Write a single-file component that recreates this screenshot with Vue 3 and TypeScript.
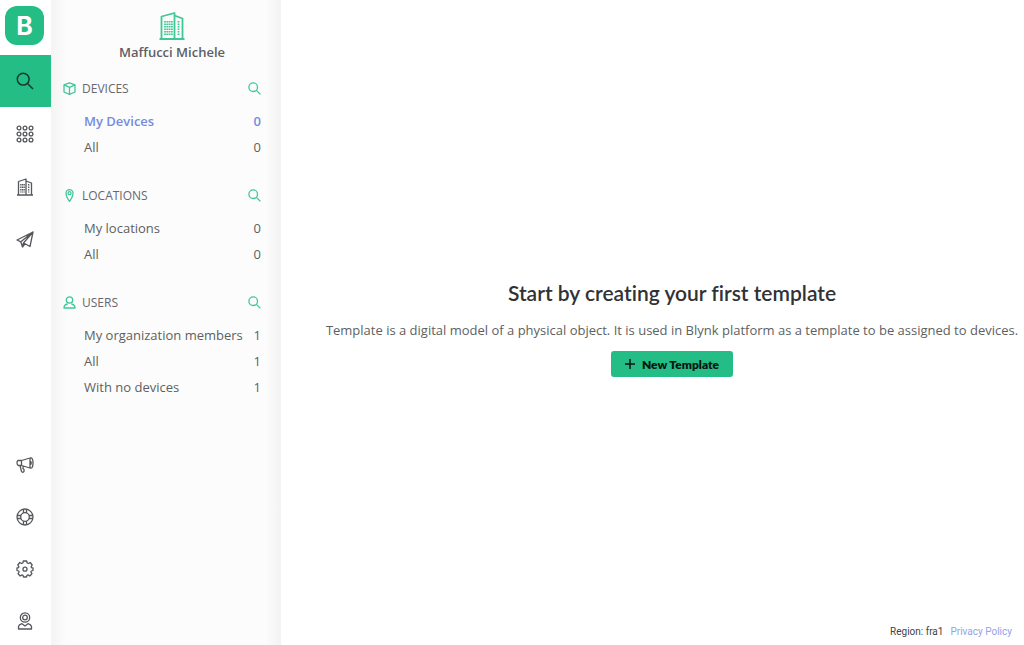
<script setup lang="ts">
interface Row {
  label: string
  count: number
  active?: boolean
}
interface Group {
  title: string
  icon: 'cube' | 'pin' | 'user'
  rows: Row[]
}

const groups: Group[] = [
  {
    title: 'DEVICES',
    icon: 'cube',
    rows: [
      { label: 'My Devices', count: 0, active: true },
      { label: 'All', count: 0 },
    ],
  },
  {
    title: 'LOCATIONS',
    icon: 'pin',
    rows: [
      { label: 'My locations', count: 0 },
      { label: 'All', count: 0 },
    ],
  },
  {
    title: 'USERS',
    icon: 'user',
    rows: [
      { label: 'My organization members', count: 1 },
      { label: 'All', count: 1 },
      { label: 'With no devices', count: 1 },
    ],
  },
]

const dots = [3, 9, 15]
</script>

<template>
  <div class="app">
    <nav class="rail" aria-label="Main">
      <a class="logo" href="#" aria-label="Home">B</a>
      <div class="rail-top">
        <button class="rail-item active" type="button" aria-label="Search">
          <svg width="18" height="18" viewBox="0 0 18 18"><circle cx="7.2" cy="7.2" r="5.9" /><path d="M11.5 11.5L17 17" /></svg>
        </button>
        <button class="rail-item" type="button" aria-label="Templates">
          <svg width="18" height="18" viewBox="0 0 18 18">
            <template v-for="y in dots" :key="y">
              <circle v-for="x in dots" :key="x" :cx="x" :cy="y" r="1.9" />
            </template>
          </svg>
        </button>
        <button class="rail-item" type="button" aria-label="Organizations">
          <svg width="18" height="18" viewBox="0 0 18 18">
            <path d="M1 17H17M2.5 17V3.5L10 1V17M10 3L15.5 5V17" />
            <path class="windows" d="M4.8 6V14.5M6.5 6V14.5M8.2 6V14.5M12.7 6V14.5" />
          </svg>
        </button>
        <button class="rail-item" type="button" aria-label="Messages">
          <svg width="18" height="18" viewBox="0 0 18 18"><path d="M17 1L1 9L4.8 10.8L6.5 16L9 12.8L14 15.5ZM17 1L4.8 10.8M17 1L7.5 12L6.5 16M7.5 12L9 12.8" /></svg>
        </button>
      </div>
      <div class="rail-bottom">
        <button class="rail-item" type="button" aria-label="Announcements">
          <svg width="18" height="18" viewBox="0 0 18 18"><path d="M5.5 4.5H2.5Q1 4.5 1 6.8T2.5 9.5H5.5ZM5.5 4.5L14 2V12L5.5 9.5M14 2Q17 1 17 7T14 12M14 5.3Q15.3 5.3 15.3 7T14 8.7M4 9.7L5.5 15.5Q6.5 17 8 15.5V13.5L7 12.5V10" /></svg>
        </button>
        <button class="rail-item" type="button" aria-label="Help">
          <svg width="18" height="18" viewBox="0 0 18 18"><circle cx="9" cy="9" r="8" /><circle cx="9" cy="9" r="4.3" /><path d="M7.5 1V5M10.5 1V5M7.5 13V17M10.5 13V17M1 7.5H5M1 10.5H5M13 7.5H17M13 10.5H17" /></svg>
        </button>
        <button class="rail-item" type="button" aria-label="Settings">
          <svg width="18" height="18" viewBox="0 0 18 18">
            <path d="M7.3 1H10.7L11.2 3L12.4 3.5L14.2 2.5L16.2 5L15.1 6.8L15.5 7.6L17 8V10.5L15.3 11L14.9 12L15.9 13.7L13.8 16L12 14.9L11 15.3L10.5 17H7.5L7 15.3L6 14.9L4.2 16L2.1 13.7L3.1 12L2.7 11L1 10.5V8L2.5 7.6L2.9 6.8L1.8 5L3.8 2.5L5.6 3.5L6.8 3Z" />
            <circle cx="9" cy="9.2" r="2" />
          </svg>
        </button>
        <button class="rail-item" type="button" aria-label="Profile">
          <svg width="18" height="18" viewBox="0 0 18 18"><circle cx="9" cy="5.5" r="4.7" /><circle cx="9" cy="5.5" r="2.3" /><path d="M2.5 17V14.5Q3 12.5 6 11.7L9 14L12 11.7Q15 12.5 15.5 14.5V17Z" /></svg>
        </button>
      </div>
    </nav>

    <aside class="panel">
      <header class="org">
        <svg class="org-icon" width="26" height="28" viewBox="0 0 26 28">
          <path d="M0.5 27H25.5M2.5 27V4.5L15.5 1V27M15.5 3.5L23.5 6.5V27" />
          <path class="windows" d="M6 9V23.5M8.3 9V23.5M10.6 9V23.5M12.9 9V23.5M19.5 9V23.5" />
        </svg>
        <span>Maffucci Michele</span>
      </header>
      <section v-for="group in groups" :key="group.title" class="group">
        <div class="group-head">
          <svg v-if="group.icon === 'cube'" width="13" height="13" viewBox="0 0 13 13"><path d="M6.5 0.8L12 2.8V10L6.5 12.3L1 10V2.8ZM1 2.8L6.5 5.3L12 2.8M6.5 5.3V12.3" /></svg>
          <svg v-else-if="group.icon === 'pin'" width="13" height="13" viewBox="0 0 13 13"><path d="M6.5 12.4Q3 7.5 3 4.2A3.5 3.5 0 0 1 10 4.2Q10 7.5 6.5 12.4Z" /><circle cx="6.5" cy="4.2" r="1.5" /></svg>
          <svg v-else width="13" height="13" viewBox="0 0 13 13"><circle cx="6.5" cy="4" r="3.2" /><path d="M4.6 8Q1 8.6 1 12H12Q12 8.6 8.4 8" /></svg>
          <h2>{{ group.title }}</h2>
          <button type="button" :aria-label="`Search ${group.title.toLowerCase()}`">
            <svg width="13" height="13" viewBox="0 0 13 13"><circle cx="5.2" cy="5.2" r="4.3" /><path d="M8.4 8.4L12.4 12.4" /></svg>
          </button>
        </div>
        <a v-for="row in group.rows" :key="row.label" class="row" :class="{ active: row.active }" href="#">
          <span>{{ row.label }}</span>
          <span>{{ row.count }}</span>
        </a>
      </section>
    </aside>

    <main class="main">
      <div class="empty">
        <h1>Start by creating your first template</h1>
        <p>Template is a digital model of a physical object. It is used in Blynk platform as a template to be assigned to devices.</p>
        <button class="primary" type="button">
          <svg width="10" height="10" viewBox="0 0 10 10"><path d="M5 0V10M0 5H10" /></svg>
          New Template
        </button>
      </div>
      <footer class="foot">
        <span>Region: fra1</span>
        <a href="#">Privacy Policy</a>
      </footer>
    </main>
  </div>
</template>

<style>
body {
  margin: 0;
}
</style>

<style scoped>
.app {
  display: flex;
  min-height: 100vh;
  background: #fff;
  color: #5d5f63;
  font-family: "Open Sans", "Noto Sans", sans-serif;
  font-size: 13px;
}
svg {
  display: block;
  flex: none;
  fill: none;
  stroke: currentColor;
  stroke-width: 1.3;
  stroke-linejoin: round;
}
button {
  border: 0;
  padding: 0;
  background: none;
  color: inherit;
  cursor: pointer;
}
a {
  text-decoration: none;
}
.windows {
  stroke-dasharray: 1.5 1;
}
.rail {
  display: flex;
  flex-direction: column;
  flex: none;
  width: 51px;
}
.logo {
  display: flex;
  align-items: center;
  justify-content: center;
  width: 39px;
  height: 39px;
  margin: 6px 5px 10px;
  border-radius: 12px;
  background: #23bd85;
  color: #fff;
  font: 700 25px Inter, sans-serif;
}
.rail-top,
.rail-bottom {
  display: flex;
  flex-direction: column;
}
.rail-top {
  gap: 1px;
}
.rail-bottom {
  gap: 4px;
  margin-top: auto;
}
.rail-item {
  display: flex;
  align-items: center;
  justify-content: center;
  height: 52px;
  padding-right: 2px;
  color: #55575b;
}
.rail-bottom .rail-item {
  height: 48px;
}
.rail-item.active {
  background: #23bd85;
  color: #153b2d;
}
.rail-item.active svg {
  stroke-width: 1.5;
}
.panel {
  box-sizing: border-box;
  flex: none;
  width: 230px;
  padding: 12px 20px 20px 12px;
  background: linear-gradient(90deg, #f4f4f4, #fcfcfc 16px, #fcfcfc calc(100% - 16px), #f3f3f3);
}
.org {
  display: flex;
  flex-direction: column;
  align-items: center;
  gap: 2px;
  height: 56px;
  padding-left: 20px;
  font-weight: 600;
  line-height: 20px;
}
.org-icon {
  color: #3fc796;
  stroke-width: 1.8;
}
.group {
  margin-bottom: 15px;
}
.group-head {
  display: flex;
  align-items: center;
  gap: 6px;
  height: 40px;
  color: #3fc796;
}
.group-head h2 {
  flex: 1;
  margin: 0;
  color: #66686c;
  font-size: 12px;
  font-weight: 400;
}
.row {
  display: flex;
  justify-content: space-between;
  padding-left: 21px;
  color: #5d5f63;
  line-height: 26px;
  white-space: nowrap;
}
.row.active {
  color: #758be0;
  font-weight: 600;
}
.main {
  display: flex;
  flex-direction: column;
  flex: 1;
  min-width: 0;
  padding: 0 12px 0 51px;
}
.empty {
  display: flex;
  flex-direction: column;
  flex: 1;
  align-items: center;
  justify-content: center;
  padding-top: 32px;
}
.empty h1 {
  margin: 0 0 12px;
  color: #303236;
  font: 600 21px/28px Lato, sans-serif;
  font-variant-ligatures: none;
}
.empty p {
  margin: 0 0 10px;
  line-height: 22px;
  white-space: nowrap;
}
.primary {
  display: flex;
  align-items: center;
  gap: 7px;
  height: 26px;
  padding: 0 14px;
  border-radius: 3px;
  background: #23bd85;
  color: #0b1512;
  font: 800 12px Lato, sans-serif;
}
.primary svg {
  stroke-width: 1.5;
}
.foot {
  display: flex;
  justify-content: flex-end;
  gap: 7px;
  padding-bottom: 5px;
  color: #424448;
  font-family: Roboto, sans-serif;
  font-size: 10px;
  line-height: 16px;
}
.foot a {
  color: #93a3e6;
}
</style>
